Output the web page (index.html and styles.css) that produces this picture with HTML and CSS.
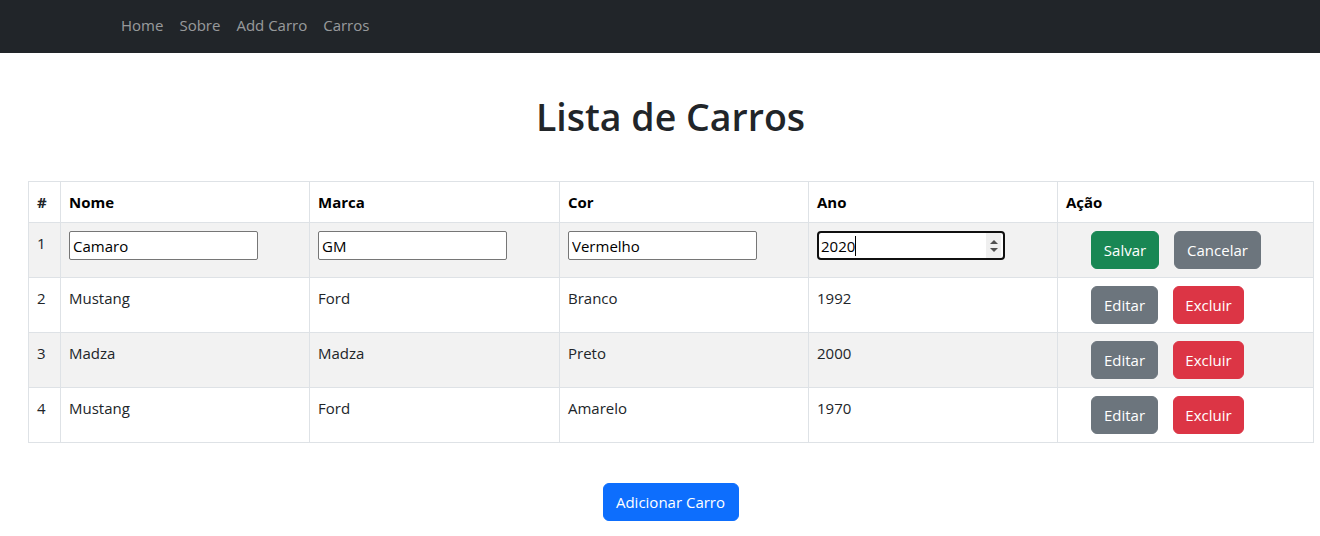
FILE: index.html
```html
<!DOCTYPE html>
<html lang="pt-BR">
<head>
<meta charset="utf-8">
<title>Lista de Carros</title>
<link rel="stylesheet" href="styles.css">
</head>
<body>
<nav class="navbar">
  <div class="nav-inner">
    <a class="nav-link" href="#">Home</a>
    <a class="nav-link" href="#">Sobre</a>
    <a class="nav-link" href="#">Add Carro</a>
    <a class="nav-link" href="#">Carros</a>
  </div>
</nav>
<main class="container">
  <h1 class="title">Lista de Carros</h1>
  <table class="cars">
    <colgroup>
      <col class="c-id"><col class="c-nome"><col class="c-marca"><col class="c-cor"><col class="c-ano"><col class="c-acao">
    </colgroup>
    <thead>
      <tr><th>#</th><th>Nome</th><th>Marca</th><th>Cor</th><th>Ano</th><th>Ação</th></tr>
    </thead>
    <tbody>
      <tr class="striped">
        <td>1</td>
        <td><input class="field" type="text" value="Camaro"></td>
        <td><input class="field" type="text" value="GM"></td>
        <td><input class="field" type="text" value="Vermelho"></td>
        <td>
          <div class="num-wrap">
            <input class="field field-focus" type="text" value="2020">
            <span class="caret"></span>
            <span class="spinner">
              <svg width="8" height="18" viewBox="0 0 8 18"><path d="M0 7 L4 3 L8 7 Z M0 11 L8 11 L4 15 Z" fill="#505050"/></svg>
            </span>
          </div>
        </td>
        <td><div class="acts"><button class="btn btn-success w-salvar">Salvar</button><button class="btn btn-secondary w-cancelar">Cancelar</button></div></td>
      </tr>
      <tr>
        <td>2</td><td>Mustang</td><td>Ford</td><td>Branco</td><td>1992</td>
        <td><div class="acts"><button class="btn btn-secondary w-editar">Editar</button><button class="btn btn-danger w-excluir">Excluir</button></div></td>
      </tr>
      <tr class="striped">
        <td>3</td><td>Madza</td><td>Madza</td><td>Preto</td><td>2000</td>
        <td><div class="acts"><button class="btn btn-secondary w-editar">Editar</button><button class="btn btn-danger w-excluir">Excluir</button></div></td>
      </tr>
      <tr>
        <td>4</td><td>Mustang</td><td>Ford</td><td>Amarelo</td><td>1970</td>
        <td><div class="acts"><button class="btn btn-secondary w-editar">Editar</button><button class="btn btn-danger w-excluir">Excluir</button></div></td>
      </tr>
    </tbody>
  </table>
  <div class="add-row">
    <button class="btn btn-primary w-add">Adicionar Carro</button>
  </div>
</main>
</body>
</html>
```
FILE: styles.css
```css
* { box-sizing: border-box; }
html, body { margin: 0; padding: 0; background: #fff; }
body {
  font-family: "Open Sans", "Noto Sans", sans-serif;
  font-size: 15px;
  line-height: 24px;
  color: #212529;
}
.navbar {
  background: #212529;
  height: 53px;
  padding-top: 13px;
}
.nav-inner {
  display: flex;
  padding-left: 113px;
}
.nav-link {
  color: rgba(255,255,255,.55);
  text-decoration: none;
  padding: 0 8px;
  line-height: 24px;
  font-size: 15px;
}
.container {
  padding: 0 7px 0 28px;
}
.title {
  margin: 40px 0 40px;
  text-align: center;
  font-size: 37.5px;
  line-height: 48px;
  font-weight: 600;
  color: #212529;
}
.cars {
  width: 1285px;
  border-collapse: collapse;
  table-layout: fixed;
  border: 1px solid #dee2e6;
}
.c-id { width: 32px; }
.c-nome { width: 249px; }
.c-marca { width: 250px; }
.c-cor { width: 249px; }
.c-ano { width: 249px; }
.c-acao { width: 256px; }
.cars th, .cars td {
  border: 1px solid #dee2e6;
  padding: 8px;
  vertical-align: top;
  text-align: left;
}
.cars th { font-weight: 700; color: #000; }
.cars th:first-child { color: #212529; }
.cars tr.striped td { background: #f2f2f2; }
.field {
  display: block;
  width: 189px;
  height: 29px;
  border: 1px solid #767676;
  border-radius: 2px;
  padding: 1px 3px;
  font-family: inherit;
  font-size: 15px;
  color: #000;
  background: #fff;
}
.num-wrap {
  position: relative;
  width: 188px;
}
.field-focus {
  width: 188px;
  border: 2px solid #101010;
  border-radius: 4px;
  padding: 1px 2px;
  outline: none;
}
.caret {
  position: absolute;
  left: 38px;
  top: 5px;
  width: 1px;
  height: 20px;
  background: #000;
}
.spinner {
  position: absolute;
  right: 4px;
  top: 2px;
  width: 15px;
  height: 25px;
  background: #efefef;
  display: flex;
  align-items: center;
  justify-content: center;
}
.acts {
  display: flex;
  gap: 15px;
  margin-left: 25px;
}
.btn {
  display: inline-block;
  height: 38px;
  padding: 6px 0;
  border: 1px solid transparent;
  border-radius: 6px;
  font-family: inherit;
  font-size: 15px;
  line-height: 24px;
  color: #fff;
  text-align: center;
  cursor: pointer;
}
.btn-success { background: #198754; border-color: #198754; }
.btn-secondary { background: #6c757d; border-color: #6c757d; }
.btn-danger { background: #dc3545; border-color: #dc3545; }
.btn-primary { background: #0d6efd; border-color: #0d6efd; }
.w-salvar { width: 68px; }
.w-cancelar { width: 87px; }
.w-editar { width: 67px; }
.w-excluir { width: 71px; }
.w-add { width: 136px; }
.add-row {
  width: 1285px;
  display: flex;
  justify-content: center;
  padding-top: 40px;
}
```
